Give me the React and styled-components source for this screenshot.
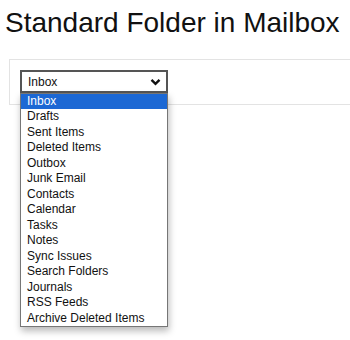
import React from 'react'
import styled, { createGlobalStyle } from 'styled-components'

const GlobalStyle = createGlobalStyle`
  html, body {
    min-height: 340px;
  }
  body {
    margin: 0;
    background: #fff;
    font-family: 'Liberation Sans', Arial, sans-serif;
  }
`

const Page = styled.main`
  min-height: 340px;
  padding: 7px 0 0 5px;
  box-sizing: border-box;
`

const Title = styled.h1`
  margin: 0 0 20px;
  font-size: 28px;
  font-weight: 400;
  line-height: 32px;
  color: #111;
  white-space: nowrap;
`

const Panel = styled.section`
  margin-left: 4px;
  padding: 10px;
  height: 24px;
  border: 1px solid #e3e3e3;
  border-right: none;
`

const SelectWrap = styled.div`
  position: relative;
  width: 148px;
`

const SelectBox = styled.div`
  box-sizing: border-box;
  height: 23px;
  border: 2px solid #555;
  display: flex;
  align-items: center;
  justify-content: space-between;
  padding: 0 5px 0 6px;
  font-size: 12px;
  color: #111;
  background: #fff;
`

const Dropdown = styled.ul`
  position: absolute;
  top: 100%;
  left: 0;
  z-index: 2;
  box-sizing: border-box;
  width: 148px;
  margin: 0;
  padding: 0;
  list-style: none;
  background: #fff;
  border: 1px solid #767676;
  box-shadow: 1px 4px 7px rgba(0, 0, 0, 0.28);
`

const Option = styled.li`
  height: 15.47px;
  line-height: 15.47px;
  padding: 0 6px;
  font-size: 12px;
  white-space: nowrap;
  color: ${({ $active }) => ($active ? '#fff' : '#111')};
  background: ${({ $active }) => ($active ? '#1c68d4' : 'transparent')};
`

const folders = [
  'Inbox',
  'Drafts',
  'Sent Items',
  'Deleted Items',
  'Outbox',
  'Junk Email',
  'Contacts',
  'Calendar',
  'Tasks',
  'Notes',
  'Sync Issues',
  'Search Folders',
  'Journals',
  'RSS Feeds',
  'Archive Deleted Items',
]

function Chevron() {
  return (
    <svg width="11" height="8" viewBox="0 0 11 8">
      <path d="M1.5 1.8 L5.5 5.8 L9.5 1.8" fill="none" stroke="#111" strokeWidth="2.4" />
    </svg>
  )
}

export default function App() {
  return (
    <Page>
      <GlobalStyle />
      <Title>Standard Folder in Mailbox</Title>
      <Panel>
        <SelectWrap>
          <SelectBox>
            <span>Inbox</span>
            <Chevron />
          </SelectBox>
          <Dropdown>
            {folders.map((name, i) => (
              <Option key={name} $active={i === 0}>{name}</Option>
            ))}
          </Dropdown>
        </SelectWrap>
      </Panel>
    </Page>
  )
}
